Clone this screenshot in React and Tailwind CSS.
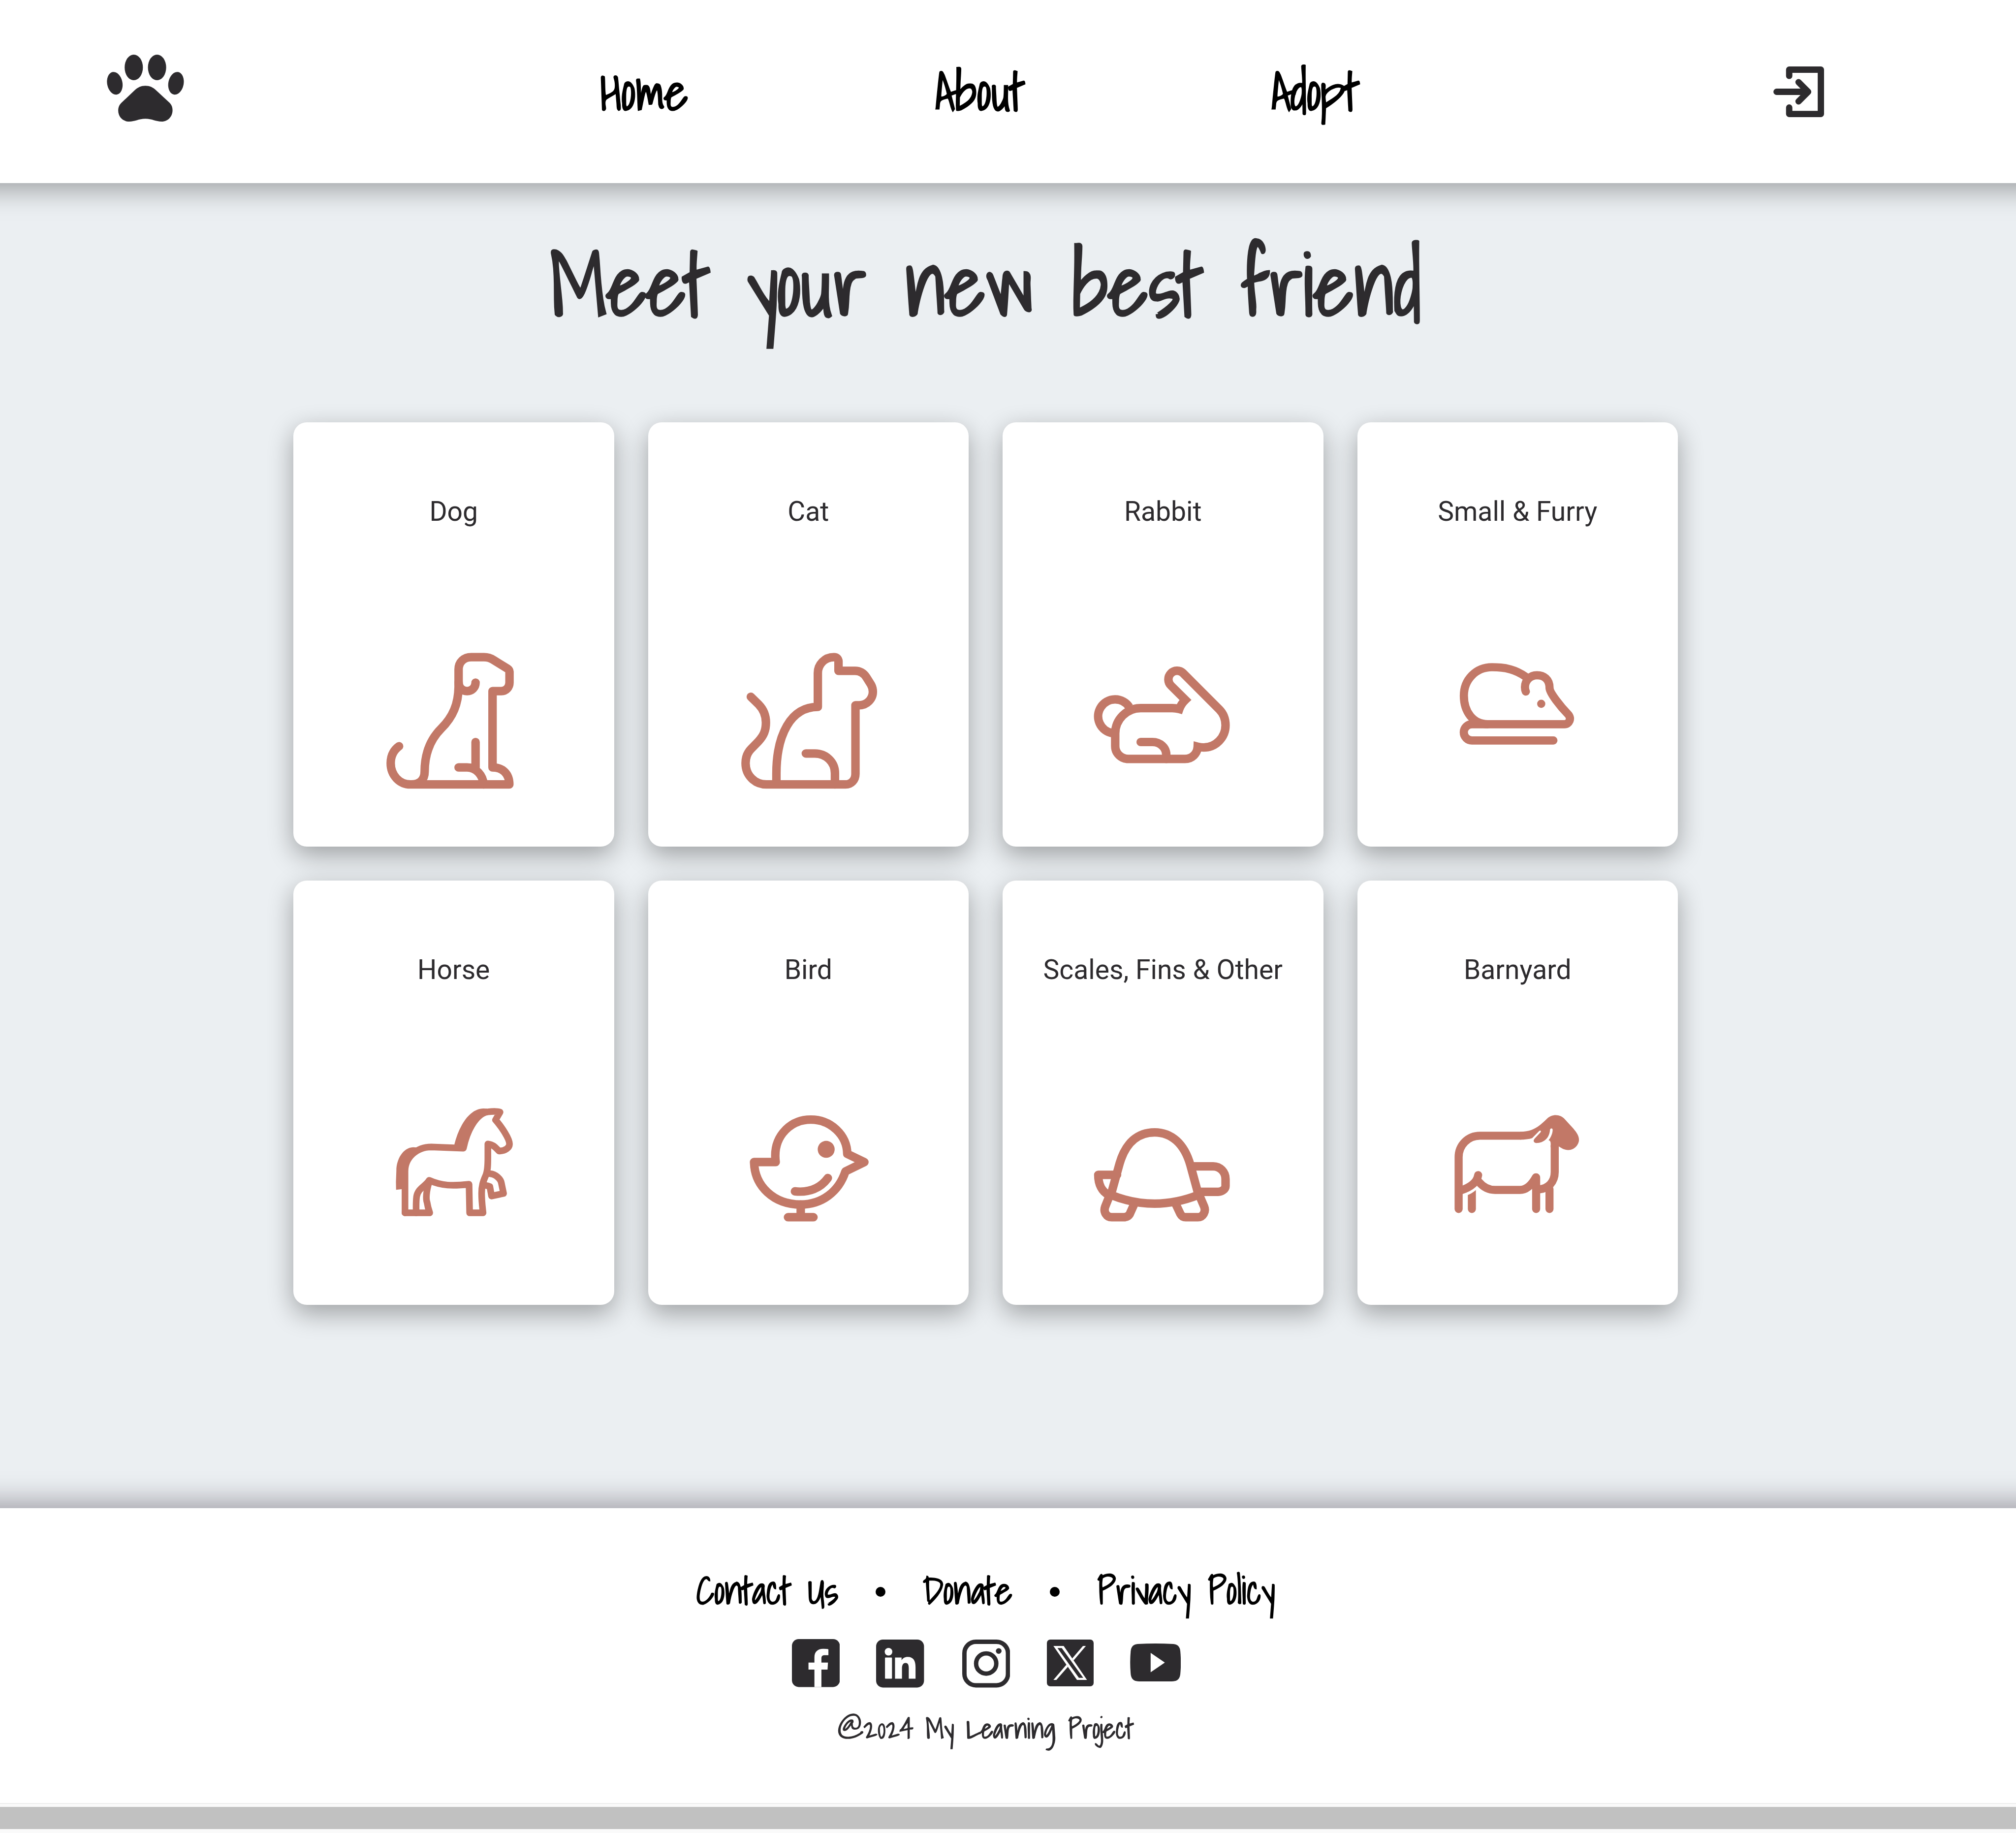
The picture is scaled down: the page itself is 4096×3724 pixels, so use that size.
const Paw = () => (
  <svg viewBox="97 87 545 473" className="h-[136px] w-[157px] shrink-0" fill="#2d2b2e">
    <ellipse cx="287" cy="177.500" rx="64.500" ry="90.500" />
    <ellipse cx="451.500" cy="177.500" rx="64.500" ry="90.500" />
    <ellipse cx="153" cy="289.500" rx="54" ry="81" transform="rotate(-11 153 289.500)" />
    <ellipse cx="585.500" cy="289.500" rx="54" ry="81" transform="rotate(11 585.500 289.500)" />
    <path d="M369 307C340 307 315 318 292 340L200 427C184 443 177 460 177 482C177 528 212 560 254 560C297 560 320 540 369 540C418 540 442 560 485 560C527 560 561 526 561 480C561 459 555 443 540 427L446 340C423 318 399 307 369 307Z" />
  </svg>
);

const Login = () => (
  <svg viewBox="177 108 360 360" className="h-[103px] w-[103px] shrink-0" fill="none" stroke="#2d2b2e" strokeWidth="45" strokeLinecap="round" strokeLinejoin="round">
    <path d="M289.500 175V130.500H514.500V445.500H289.500V400M200 288H424M356 220L424 288L356 356" />
  </svg>
);

const Dog = () => (
  <g strokeWidth="60">
    <path d="M182 780C143 808 123 850 123 900C123 985 185 1050 262 1050H962C962 975 915 930 843 930V390H905C940 390 963 362 963 330V254Q962 240 950 232L850 170Q820 150 783 150H693C640 150 603 185 603 237V360C601 480 565 570 480 655C400 735 363 840 363 960C363 1015 330 1050 270 1050" />
    <path d="M603 330C603 366 630 390 663 390C696 390 723 366 723 330M723 750V930M603 930H663C727 930 775 985 780 1050" />
  </g>
);

const Cat = () => (
  <g strokeWidth="60">
    <path d="M148 430L205 486C238 520 255 562 255 612C255 668 240 704 203 744L150 799C125 824 111 858 111 900C111 985 175 1050 258 1050H818C858 1050 888 1018 888 975V490H915C970 490 1011 445 1011 395C1011 374 1006 358 997 343L965 292C946 263 920 247 885 247H768V180Q766 150 735 150C670 150 622 202 622 262V502C430 502 329 700 329 975V1050" />
    <path d="M537 831H600C680 831 743 892 743 970V1050" />
  </g>
);

const Rabbit = () => (
  <g strokeWidth="60">
    <path strokeLinecap="butt" d="M336 412A120 120 0 1 0 216 597" />
    <path strokeLinejoin="miter" d="M690 427Q665 420 640 420H417C318 420 237 500 237 600V690C237 740 280 780 330 780H730C780 780 818 742 820 693Q843 699 862 699C948 699 1017 628 1017 542C1017 500 1003 460 973 430L717 173A60 60 0 0 0 632 262L733 362Q702 392 690 427Z" />
    <path d="M417 660H500C555 660 598 700 598 750V780" />
  </g>
);

const Mouse = () => (
  <g strokeWidth="58">
    <path d="M586 197C520 150 450 131 350 131C235 131 151 220 151 332C151 445 215 534 320 534" />
    <path d="M784 649H208A57.500 57.500 0 0 1 208 534H862C897 534 912 496 891 468C835 410 757 312 757 278C757 215 715 188 668 188C620 188 583 225 583 272Q583 290 589 303" />
    <circle cx="698" cy="390" r="29" fill="#c27867" stroke="none" />
  </g>
);

const Horse = () => (
  <g strokeWidth="47">
    <path d="M164 839V545C164 450 245 373 350 373L577 382C600 270 665 125 750 125Q810 118 836 127L804 182C850 235 903 315 903 352C903 378 875 400 829 402C805 380 795 358 750 352V450C750 510 748 545 735 575C715 620 706 650 706 700C706 760 712 800 716 839H621L617 637C500 650 420 648 335 609C310 652 255 665 246 725C241 765 243 800 243 839" />
    <path d="M335 620C312 690 312 745 320 765Q325 800 339 839H164" />
    <path d="M765 562C805 565 842 600 846 630L861 702L776 720L764 653Q750 647 735 645" />
    <path fill="#c27867" stroke="none" d="M101 676L139 672H164V545C164 470 200 420 262 385L246 377Q235 375 222 375C150 378 103 460 103 540L100 620Z" />
    <path fill="#c27867" stroke="none" d="M513 356C545 225 620 101 720 101L745 103L750 148C690 160 625 260 598 385L560 395Z" />
  </g>
);

const Bird = () => (
  <g strokeWidth="60">
    <path d="M111 450H264Q261 430 261 405C261 260 370 150 512 150C655 150 768 260 770 392L891 450L757 516C710 660 590 750 441 750C250 750 115 620 111 450Z" />
    <path d="M400 657C500 668 580 635 633 563M441 750V840M351 840H531" />
    <circle cx="621" cy="360" r="60" fill="#c27867" stroke="none" />
  </g>
);

const Turtle = () => (
  <g strokeWidth="60">
    <path strokeLinecap="butt" d="M207 590L268 370C310 225 395 150 515 150C635 150 725 230 768 380L826 592Q515 716 205 592" />
    <path d="M250 450H117C117 520 145 570 190 592M785 390H930C978 390 1017 430 1017 480V530C1017 552 990 570 965 570H830" />
    <path strokeLinecap="butt" d="M196 600L166 675C152 712 175 750 212 750H300Q328 748 340 727L372 655M664 655L698 727Q710 750 735 750H822C858 750 880 710 866 675L834 600" />
  </g>
);

const Sheep = () => (
  <g strokeWidth="57">
    <path d="M114 782V415C114 330 180 263.500 265 263.500H550" />
    <path strokeLinecap="butt" d="M793.500 330V520C793.500 590 750 635 685 643" />
    <path d="M662 558V782M756.500 640V782M252 542C245 590 200 628 125 652" />
    <path d="M257 590C290 630 330 647 372 647H547C592 647 630 612 660 558" />
    <path fill="#c27867" stroke="none" d="M179 683Q208 672 236 648V782A28.500 28.500 0 0 1 179 782Z" />
    <path fill="#c27867" stroke="none" d="M550 235C640 235 680 200 740 142C775 110 830 108 866 148L925 213C950 243 965 265 965 293C965 325 935 365 890 365C860 365 843 352 822 339V345H765V320Q765 297 750 295C767 275 779 245 779 222C779 208 762 208 760 222C757 275 720 315 663 315C645 315 638 298 652 283L692 241C702 230 690 222 682 232L634 281Q600 292 550 292Z" />
  </g>
);

const pets = [
  { name: "Dog", Art: Dog, box: "-33 0 1200 1200" },
  { name: "Cat", Art: Cat, box: "-45 0 1200 1200" },
  { name: "Rabbit", Art: Rabbit, box: "-27 -90 1200 1200" },
  { name: "Small & Furry", Art: Mouse, box: "-69 -90 1200 1200" },
  { name: "Horse", Art: Horse, box: "-93 0 1200 1200" },
  { name: "Bird", Art: Bird, box: "-105 -30 1200 1200" },
  { name: "Scales, Fins & Other", Art: Turtle, box: "-27 -120 1200 1200" },
  { name: "Barnyard", Art: Sheep, box: "-69 -30 1200 1200" },
];

const Card = ({ name, Art, box }) => (
  <article className="flex h-[862px] w-[651.500px] flex-col items-center rounded-[27.500px] bg-white pt-[145px] shadow-[0_17px_52px_rgba(0,0,0,0.33)]">
    <h2 className="h-[288.500px] font-['Roboto'] text-[55.200px] leading-[72px] text-[#2d2b2e]">{name}</h2>
    <svg viewBox={box} className="h-[344.800px] w-[344.800px]" fill="none" stroke="#c27867" strokeLinecap="round" strokeLinejoin="round">
      <Art />
    </svg>
  </article>
);

const Socials = () => (
  <div className="ml-[3px] flex h-[98px] items-center">
    <svg viewBox="0 0 113 113" className="mb-[2px] h-[97.400px] w-[97.400px]">
      <rect width="113" height="113" rx="16" fill="#2d2b2e" />
      <path fill="#fff" d="M53 113V72H39V55.500H53V43C53 30 61 23 74 23Q82 23 86 24V38H77.500C71 38 69.500 41 69.500 46V55.500H85L84 72H69.500V113Z" />
    </svg>
    <svg viewBox="0 0 113 113" className="ml-[74px] h-[97.400px] w-[97.400px]">
      <rect width="113" height="113" rx="16" fill="#2d2b2e" />
      <g fill="#fff">
        <circle cx="29.300" cy="28.700" r="9" />
        <rect x="21" y="42.300" width="16.500" height="50" rx="1.500" />
        <path d="M44.600 42.300H60V49C63 44 68 41 74.500 41C88 41 93 50 93 65V92.300H77V68C77 60 75.500 55 69.500 55C63.500 55 61 60 61 68V92.300H44.600Z" />
      </g>
    </svg>
    <svg viewBox="0 0 113 113" className="ml-[77px] h-[97.400px] w-[97.400px]" fill="none" stroke="#2d2b2e" strokeWidth="10.300">
      <rect x="5.150" y="5.150" width="102.700" height="102.700" rx="27" />
      <circle cx="56.500" cy="56.500" r="23.800" />
      <circle cx="86" cy="27" r="6.700" fill="#2d2b2e" stroke="none" />
    </svg>
    <svg viewBox="0 0 110 110" className="mb-[4px] ml-[75.500px] h-[95px] w-[95px]">
      <rect width="110" height="110" rx="8" fill="#2d2b2e" />
      <path fill="#fff" fillRule="evenodd" d="M15.300 15H39.500L94.400 95H70.800ZM24.900 20L75.300 90H85.500L35 20Z" />
      <path fill="#fff" d="M84.800 15H91.800L63 49L59.500 44.500ZM15.300 95H22.300L49.500 64L46 59Z" />
    </svg>
    <svg viewBox="0 0 120 90" className="mb-[5px] ml-[73.500px] h-[77.600px] w-[103.400px]">
      <path fill="#2d2b2e" d="M18 1Q60 -1 102 1Q117 2 118.500 18Q121 45 118.500 72Q117 88 102 89Q60 91 18 89Q3 88 1.500 72Q-1 45 1.500 18Q3 2 18 1Z" />
      <path fill="#fff" d="M48.500 22L82 45L48.500 68Z" />
    </svg>
  </div>
);

const Dot = () => <span className="mt-[7px] h-[20px] w-[20px] rounded-full bg-black" />;

export default function App() {
  return (
    <div className="flex h-[3724px] w-[4096px] flex-col items-center overflow-hidden bg-[#ebeff2] font-['Shadows_Into_Light','Liberation_Sans_Narrow','Roboto',sans-serif]">
      <header className="flex h-[372px] w-[4296px] shrink-0 items-center bg-white pr-[490px] pl-[317px] shadow-[0_13px_52px_rgba(0,0,0,0.34)]">
        <div className="-mt-[14px]">
          <Paw />
        </div>
        <nav className="ml-[594px] flex text-[103.400px] leading-[130px] font-bold text-black">
          <a className="flex w-[681.500px] justify-center">Home</a>
          <a className="flex w-[681.500px] justify-center">About</a>
          <a className="flex w-[681.500px] justify-center">Adopt</a>
        </nav>
        <div className="ml-auto">
          <Login />
        </div>
      </header>

      <main className="flex h-[2692px] w-[4005px] shrink-0 flex-col items-center self-start">
        <h1 className="h-[486px] pt-[87px] text-[172.400px] leading-[236px] font-bold text-[#2d2b2e]">
          Meet your new best friend
        </h1>
        <section className="grid grid-cols-4 gap-x-[69px] gap-y-[69px]">
          {pets.map((pet) => (
            <Card key={pet.name} {...pet} />
          ))}
        </section>
      </main>

      <footer className="flex h-[599px] w-[4296px] shrink-0 flex-col bg-white pl-[100px] shadow-[0_-13px_52px_rgba(20,10,25,0.34)]">
        <div className="flex w-[4005px] flex-col items-center">
          <div className="flex h-[267px] items-center pt-[66px] text-[75.850px] leading-[100px] font-bold text-black">
            <span>Contact Us</span>
            <span className="flex w-[172px] justify-center"><Dot /></span>
            <span>Donate</span>
            <span className="flex w-[172px] justify-center"><Dot /></span>
            <span>Privacy Policy</span>
          </div>
          <Socials />
          <p className="mt-[38px] text-[55.200px] leading-[90px] font-bold text-[#2d2b2e]">
            @2024 My Learning Project
          </p>
        </div>
      </footer>

      <div className="h-[61px] w-full shrink-0 border-t-2 border-[#ededed] bg-[#fafafa] pt-[6px]">
        <div className="h-[45px] bg-[#c1c1c1]" />
      </div>
    </div>
  );
}
